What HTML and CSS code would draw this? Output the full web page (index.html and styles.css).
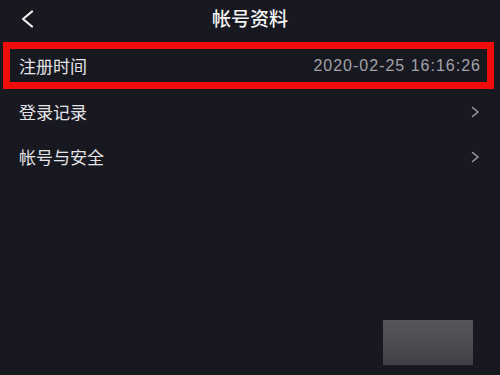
FILE: index.html
```html
<!DOCTYPE html>
<html lang="zh-CN">
<head>
<meta charset="utf-8">
<title>帐号资料</title>
<link rel="stylesheet" href="styles.css">
</head>
<body>
<div class="page">
  <header class="header">
    <span class="back">
      <svg width="14" height="18" viewBox="0 0 14 18"><path d="M12 1.5 L3 9 L12 16.5" fill="none" stroke="#f2f2f2" stroke-width="2.2" stroke-linecap="round" stroke-linejoin="round"/></svg>
    </span>
    <h1 class="title">帐号资料</h1>
  </header>
  <div class="list">
    <div class="row row-highlight">
      <span class="label">注册时间</span>
      <span class="value">2020-02-25 16:16:26</span>
    </div>
    <div class="row">
      <span class="label">登录记录</span>
      <svg class="chev" width="9" height="12" viewBox="0 0 9 12"><path d="M1.5 1.5 L7 6 L1.5 10.5" fill="none" stroke="#9a9aa0" stroke-width="1.6" stroke-linecap="round" stroke-linejoin="round"/></svg>
    </div>
    <div class="row">
      <span class="label">帐号与安全</span>
      <svg class="chev" width="9" height="12" viewBox="0 0 9 12"><path d="M1.5 1.5 L7 6 L1.5 10.5" fill="none" stroke="#9a9aa0" stroke-width="1.6" stroke-linecap="round" stroke-linejoin="round"/></svg>
    </div>
  </div>
  <div class="blur"></div>
</div>
</body>
</html>
```
FILE: styles.css
```css
html, body {
  margin: 0;
  padding: 0;
  background: #181821;
}
.page {
  position: relative;
  width: 500px;
  height: 375px;
  overflow: hidden;
  background: #181821;
  font-family: "Noto Sans CJK SC", "Noto Sans", sans-serif;
  color: #e6e6e8;
}
.header {
  height: 40px;
  display: flex;
  align-items: center;
  justify-content: center;
  position: relative;
}
.back {
  position: absolute;
  left: 20px;
  top: 10px;
  display: flex;
}
.title {
  margin: 0;
  font-size: 19px;
  font-weight: 500;
  color: #f4f4f4;
  line-height: 1;
  margin-top: -6px;
}
.list {
  display: flex;
  flex-direction: column;
}
.row {
  height: 45px;
  display: flex;
  align-items: center;
  justify-content: space-between;
  padding: 0 20px 0 19px;
  box-sizing: border-box;
}
.row-highlight {
  margin: 2px 6px 0 3px;
  height: 47px;
  border: 7px solid #f20d0d;
  padding: 0 7px 0 9px;
}
.label {
  font-size: 17px;
  color: #e4e4e6;
  line-height: 1;
}
.value {
  font-family: "Liberation Sans", Arial, sans-serif;
  font-size: 16px;
  color: #a2a2a8;
  letter-spacing: 1px;
  margin-right: -1px;
}
.chev {
  display: block;
}
.blur {
  position: absolute;
  left: 383px;
  top: 320px;
  width: 90px;
  height: 45px;
  background: linear-gradient(180deg, #55555c 0%, #4b4b52 55%, #3f3f46 100%);
}
```
